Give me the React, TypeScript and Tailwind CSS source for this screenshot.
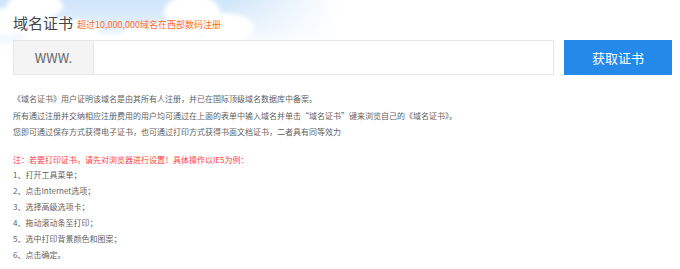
import React from "react";

const steps = [
  "1、打开工具菜单；",
  "2、点击Internet选项；",
  "3、选择高级选项卡；",
  "4、拖动滚动条至打印；",
  "5、选中打印背景颜色和图案；",
  "6、点击确定。",
];

function SkyBackground() {
  return (
    <svg
      className="absolute left-0 top-0 pointer-events-none"
      width="680"
      height="90"
      viewBox="0 0 680 90"
    >
      <defs>
        <linearGradient id="sky" x1="0" y1="0" x2="0" y2="1">
          <stop offset="0" stopColor="#cfe5fa" />
          <stop offset="0.5" stopColor="#e6f2fd" />
          <stop offset="1" stopColor="#ffffff" stopOpacity="0" />
        </linearGradient>
        <linearGradient id="fade" x1="0" y1="0" x2="1" y2="0">
          <stop offset="0" stopColor="#ffffff" stopOpacity="0" />
          <stop offset="0.33" stopColor="#ffffff" stopOpacity="0" />
          <stop offset="0.5" stopColor="#ffffff" stopOpacity="1" />
        </linearGradient>
        <filter id="blur" x="-20%" y="-20%" width="140%" height="140%">
          <feGaussianBlur stdDeviation="2" />
        </filter>
      </defs>
      <rect x="0" y="0" width="680" height="60" fill="url(#sky)" />
      <g fill="#ffffff" filter="url(#blur)">
        <ellipse cx="35" cy="6" rx="28" ry="13" />
        <ellipse cx="6" cy="22" rx="20" ry="14" />
        <ellipse cx="60" cy="32" rx="40" ry="13" />
        <ellipse cx="192" cy="12" rx="28" ry="17" />
        <ellipse cx="226" cy="28" rx="28" ry="15" />
        <ellipse cx="160" cy="36" rx="40" ry="13" />
        <ellipse cx="120" cy="48" rx="120" ry="13" />
      </g>
      <rect x="0" y="0" width="680" height="90" fill="url(#fade)" />
    </svg>
  );
}

export default function App() {
  return (
    <div
      className="relative w-[680px] h-[269px] overflow-hidden bg-white"
      style={{ fontFamily: '"Noto Sans CJK SC", "Noto Sans", sans-serif' }}
    >
      <SkyBackground />
      <div className="relative pl-[13px] pr-[8px] pt-[12px]">
        <div className="flex items-end gap-[4px] h-[22px]">
          <h1 className="text-[15px] leading-[22px] text-[#444] font-normal">域名证书</h1>
          <span className="text-[9px] leading-[18px] text-[#ff6f1f]">超过10,000,000域名在西部数码注册</span>
        </div>

        <div className="mt-[6px] flex h-[35px]">
          <div className="w-[81px] shrink-0 flex items-center justify-center bg-[#f4f4f4] border border-[#e6e6e6] text-[13px] text-[#666]">
            WWW.
          </div>
          <input
            className="w-[460px] shrink-0 border border-l-0 border-[#e6e6e6] bg-white outline-none"
            type="text"
          />
          <button className="ml-[10px] w-[108px] shrink-0 bg-[#2589e9] text-white text-[13px]">获取证书</button>
        </div>

        <div className="mt-[16px] text-[8px] leading-[16.5px] text-[#5f5f5f]">
          <p>《域名证书》用户证明该域名是由其所有人注册，并已在国际顶级域名数据库中备案。</p>
          <p>所有通过注册并交纳相应注册费用的用户均可通过在上面的表单中输入域名并单击“域名证书”键来浏览自己的《域名证书》。</p>
          <p>您即可通过保存方式获得电子证书，也可通过打印方式获得书面文档证书，二者具有同等效力</p>
        </div>

        <div className="mt-[11px] text-[8px] leading-[16px] text-[#5f5f5f]">
          <p className="text-[#ff4040] leading-[15px]">注：若要打印证书，请先对浏览器进行设置！具体操作以IE5为例：</p>
          {steps.map((s) => (
            <p key={s}>{s}</p>
          ))}
        </div>
      </div>
    </div>
  );
}
